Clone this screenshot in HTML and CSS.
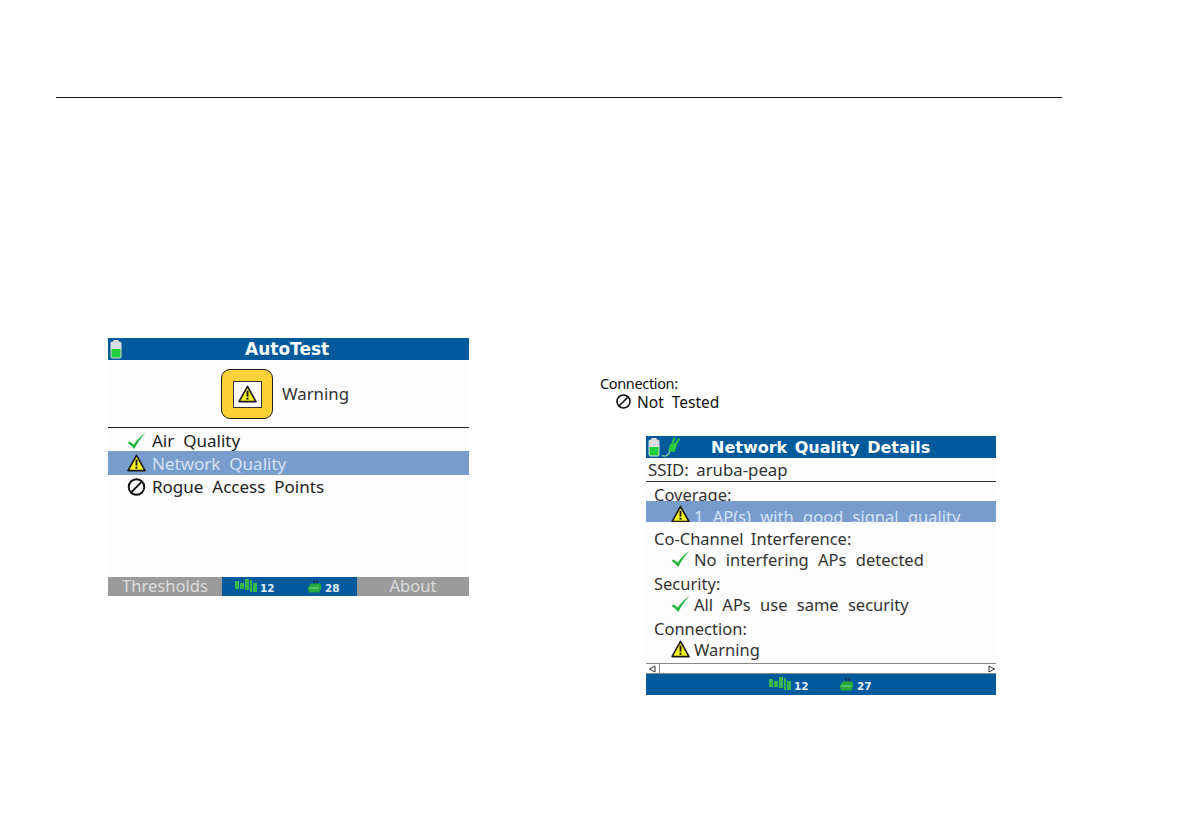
FILE: index.html
```html
<!DOCTYPE html>
<html lang="en">
<head>
<meta charset="utf-8">
<title>AutoTest</title>
<link rel="stylesheet" href="styles.css">
</head>
<body>
<svg class="defs" width="0" height="0" aria-hidden="true">
  <symbol id="warn" viewBox="0 0 19 18">
    <path d="M9.5 1.4 L18 16.6 H1 Z" fill="#f8f21c" stroke="#1a1a1a" stroke-width="1.6" stroke-linejoin="round"/>
    <path d="M9.5 5.6 V11.6" stroke="#1a1a1a" stroke-width="1.9"/>
    <rect x="8.5" y="12.7" width="2" height="2" fill="#1a1a1a"/>
  </symbol>
  <symbol id="check" viewBox="0 0 18 16">
    <path d="M0.6 9.6 L2.6 8.4 L6.4 11.4 C9 7.4 12.6 3.4 17.4 0.4 C13 5 9.6 10 7 15.6 C5 13.4 3 11.4 0.6 9.6 Z" fill="#25b53c"/>
  </symbol>
  <symbol id="none" viewBox="0 0 18 18">
    <circle cx="9" cy="9" r="7.8" fill="none" stroke="#111" stroke-width="1.9"/>
    <path d="M3.6 14.4 L14.4 3.6" stroke="#111" stroke-width="1.9"/>
  </symbol>
  <symbol id="battery" viewBox="0 0 12 19">
    <rect x="3.5" y="0" width="5" height="2" fill="#ddd"/>
    <rect x="0.5" y="1.5" width="11" height="17" rx="2" fill="#d8dde0"/>
    <rect x="1.5" y="9" width="9" height="8.5" fill="#1fd03c"/>
  </symbol>
  <symbol id="bars" viewBox="0 0 22 13">
    <rect x="0" y="2" width="4" height="8" fill="#35b84e"/>
    <rect x="5" y="4" width="4" height="6" fill="#35b84e"/>
    <rect x="10" y="0" width="4" height="11" fill="#35b84e"/>
    <rect x="15" y="1" width="2" height="12" fill="#35b84e"/>
    <rect x="18" y="4" width="4" height="9" fill="#35b84e"/>
  </symbol>
  <symbol id="router" viewBox="0 0 15 13">
    <path d="M7 0 V4 M10 0 V4" stroke="#123" stroke-width="1"/>
    <path d="M4 3.5 H13.5 L14.5 8 L12 12.5 H2 L0.5 8.5 Z" fill="#26a83e"/>
    <path d="M2 8 H12" stroke="#7fdc8c" stroke-width="1"/>
  </symbol>
</svg>

<header class="rule"></header>

<main class="columns">
  <section class="screen screen-auto">
    <div class="title">
      <svg class="batt"><use href="#battery"/></svg>
      <span class="title-text">AutoTest</span>
    </div>
    <div class="status">
      <div class="badge"><div class="badge-inner"><svg class="ico-badge"><use href="#warn"/></svg></div></div>
      <span class="status-label">Warning</span>
    </div>
    <ul class="list">
      <li class="item"><svg class="ico"><use href="#check"/></svg><span>Air Quality</span></li>
      <li class="item item-sel"><svg class="ico"><use href="#warn"/></svg><span>Network Quality</span></li>
      <li class="item"><svg class="ico"><use href="#none"/></svg><span>Rogue Access Points</span></li>
    </ul>
    <footer class="foot">
      <div class="soft soft-left">Thresholds</div>
      <div class="counts counts-auto">
        <svg class="ico-bars"><use href="#bars"/></svg><b class="num num-a">12</b>
        <svg class="ico-router"><use href="#router"/></svg><b class="num">28</b>
      </div>
      <div class="soft soft-right">About</div>
    </footer>
  </section>

  <section class="right">
    <div class="conn">
      <div class="conn-head">Connection:</div>
      <div class="conn-val"><svg class="ico-sm"><use href="#none"/></svg><span>Not Tested</span></div>
    </div>
    <div class="screen screen-details">
      <div class="title title-details">
        <svg class="batt"><use href="#battery"/></svg>
        <svg class="plug" viewBox="0 0 20 20">
          <path d="M1 18.6 C5 20 8 18 9 14" fill="none" stroke="#8fd09a" stroke-width="1.3"/>
          <path d="M7.5 14 L9 7 L17 5 L13.5 15 Z" fill="#2ecb3e"/>
          <path d="M11.5 6 L13.5 0.5 M15.5 6 L18.5 1.5" stroke="#2ecb3e" stroke-width="2"/>
        </svg>
        <span class="title-text-details">Network Quality Details</span>
      </div>
      <div class="ssid">SSID: aruba-peap</div>
      <div class="details">
        <div class="cov-head">Coverage:</div>
        <div class="cov-row"><svg class="ico"><use href="#warn"/></svg><span>1 AP(s) with good signal quality</span></div>
        <div class="dt">Co-Channel Interference:</div>
        <div class="dd"><svg class="ico"><use href="#check"/></svg><span>No interfering APs detected</span></div>
        <div class="dt">Security:</div>
        <div class="dd"><svg class="ico"><use href="#check"/></svg><span>All APs use same security</span></div>
        <div class="dt">Connection:</div>
        <div class="dd"><svg class="ico"><use href="#warn"/></svg><span>Warning</span></div>
      </div>
      <div class="scroll">
        <svg class="arrow" viewBox="0 0 8 8"><path d="M7 1 L1.5 4 L7 7 Z" fill="#fff" stroke="#333" stroke-width="1"/></svg>
        <span class="thumb"></span>
        <svg class="arrow arrow-r" viewBox="0 0 8 8"><path d="M1 1 L6.5 4 L1 7 Z" fill="#fff" stroke="#333" stroke-width="1"/></svg>
      </div>
      <div class="foot foot-details">
        <svg class="ico-bars"><use href="#bars"/></svg><b class="num num-b">12</b>
        <svg class="ico-router"><use href="#router"/></svg><b class="num">27</b>
      </div>
    </div>
  </section>
</main>
</body>
</html>
```

FILE: styles.css
```css
* { box-sizing: border-box; }
html, body { margin: 0; padding: 0; }
body {
  width: 1188px;
  height: 828px;
  overflow: hidden;
  background: #fff;
  color: #222;
  font-family: "Noto Sans", "DejaVu Sans", sans-serif;
}
.defs { display: block; height: 0; }
.rule {
  margin: 97px 0 0 56px;
  width: 1006px;
  height: 1px;
  background: #111;
}
.columns {
  display: flex;
  align-items: flex-start;
  padding-left: 108px;
}
.screen { background: #fdfdfd; display: flex; flex-direction: column; }
.screen-auto { width: 361px; height: 258px; margin-top: 240px; }
.right { margin-left: 131px; margin-top: 277px; display: flex; flex-direction: column; }

.title {
  height: 22px;
  background: #005a9c;
  color: #fff;
  display: flex;
  align-items: center;
  position: relative;
  flex: none;
  font-family: "DejaVu Sans", sans-serif;
}
.batt { width: 12px; height: 19px; margin-left: 2px; flex: none; }
.title-text {
  position: absolute;
  left: 137px;
  font-size: 17px;
  font-weight: 700;
}
.status {
  height: 68px;
  display: flex;
  align-items: center;
  padding-left: 113px;
  border-bottom: 1px solid #222;
  flex: none;
}
.badge {
  width: 52px;
  height: 50px;
  background: #fbd137;
  border: 1.5px solid #222;
  border-radius: 9px;
  display: flex;
  align-items: center;
  justify-content: center;
  margin-top: 1px;
}
.badge-inner {
  width: 29px;
  height: 27px;
  background: #fdfdfd;
  border: 1px solid #333;
  display: flex;
  align-items: center;
  justify-content: center;
}
.ico-badge { width: 19px; height: 18px; }
.status-label { margin-left: 9px; font-size: 16.8px; color: #333; padding-bottom: 1px; }

.list { list-style: none; margin: 2px 0 0; padding: 0; flex: 1; }
.item {
  height: 23px;
  display: flex;
  align-items: center;
  padding-left: 19px;
  font-size: 17px;
  word-spacing: 4.5px;
  color: #222;
}
.item:first-child { height: 21px; }
.item-sel { height: 24px; background: #789ccc; color: #d3e2f6; }
.ico { width: 19px; height: 18px; flex: none; margin-right: 6px; }

.foot { height: 19px; display: flex; flex: none; background: #005a9c; }
.soft {
  background: #9b9b9b;
  color: #dcdcdc;
  font-size: 16.6px;
  line-height: 18px;
  text-align: center;
}
.soft-left { width: 114px; }
.soft-right { width: 112px; }
.counts { width: 135px; display: flex; align-items: center; }
.counts-auto { padding-left: 13px; }
.ico-bars { width: 22px; height: 13px; flex: none; margin-top: -3px; }
.ico-router { width: 15px; height: 13px; flex: none; }
.num {
  color: #e4eef8;
  font-family: "DejaVu Sans", sans-serif;
  font-size: 10.5px;
  font-weight: 700;
  margin-left: 3px;
  padding-top: 3px;
}
.num-a { width: 47px; }
.num-b { width: 45px; }

.conn { height: 61px; color: #111; }
.conn-head { height: 17px; line-height: 17px; font-size: 14.5px; letter-spacing: -.35px; }
.conn-val {
  display: flex;
  align-items: center;
  height: 19px;
  padding-left: 16px;
  font-size: 15.5px;
  word-spacing: 4px;
}
.ico-sm { width: 15px; height: 15px; margin-right: 6px; flex: none; }

.screen-details { width: 350px; height: 259px; margin-left: 46px; }
.plug { width: 20px; height: 20px; flex: none; margin-left: 1px; }
.title-text-details {
  margin-left: 30px;
  font-size: 16px;
  font-weight: 700;
  word-spacing: 2px;
}
.ssid {
  height: 24px;
  line-height: 24px;
  padding-left: 2px;
  font-size: 16.8px;
  word-spacing: 3px;
  border-bottom: 1px solid #333;
  flex: none;
  color: #333;
}
.details { flex: 1; overflow: hidden; font-size: 16.5px; color: #333; word-spacing: 5px; }
.cov-head { height: 19px; line-height: 26px; padding-left: 8px; overflow: hidden; }
.cov-row {
  height: 21px;
  background: #789ccc;
  color: #d3e2f6;
  padding: 4px 0 0 25px;
  display: flex;
  align-items: center;
  overflow: hidden;
  white-space: nowrap;
}
.cov-row .ico { margin-right: 4px; }
.cov-row span { padding-top: 5px; }
.dt { height: 20px; line-height: 20px; padding-left: 8px; margin-top: 5px; word-spacing: 3px; }
.cov-row + .dt { margin-top: 7px; }
.dd {
  height: 20px;
  display: flex;
  align-items: center;
  padding-left: 25px;
}
.dd .ico { margin-right: 4px; }
.scroll {
  height: 11px;
  flex: none;
  border: 1px solid #888;
  border-width: 1px 0;
  display: flex;
  align-items: center;
  background: #fff;
}
.arrow { width: 8px; height: 8px; margin-left: 2px; flex: none; }
.thumb { width: 1px; height: 9px; background: #888; margin-left: 3px; flex: none; }
.arrow-r { margin-left: auto; margin-right: 0; }
.foot-details { height: 21px; align-items: center; padding-left: 123px; }
```
